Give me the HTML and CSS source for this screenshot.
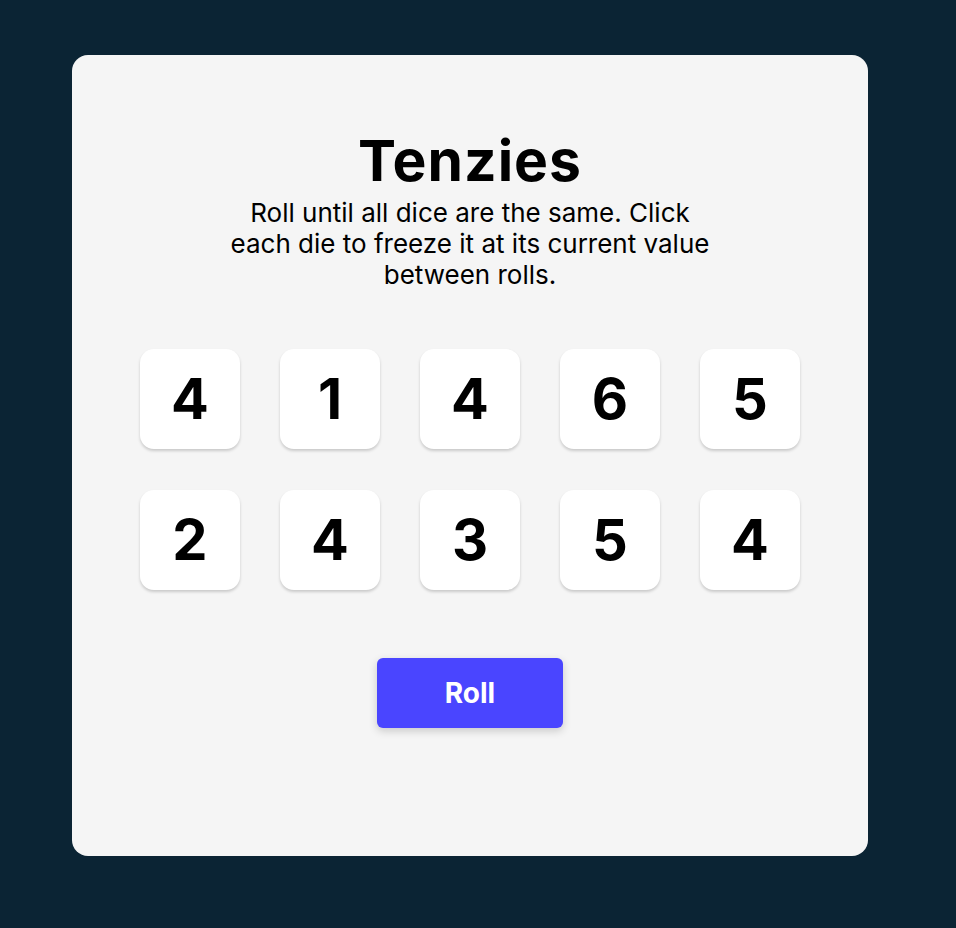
FILE: index.html
```html
<!DOCTYPE html>
<html>
<head>
<meta charset="utf-8">
<link rel="stylesheet" href="styles.css">
</head>
<body>
<main class="card">
  <h1 class="title">Tenzies</h1>
  <p class="instructions">Roll until all dice are the same. Click each die to freeze it at its current value between rolls.</p>
  <div class="dice">
    <button class="die">4</button>
    <button class="die">1</button>
    <button class="die">4</button>
    <button class="die">6</button>
    <button class="die">5</button>
    <button class="die">2</button>
    <button class="die">4</button>
    <button class="die">3</button>
    <button class="die">5</button>
    <button class="die">4</button>
  </div>
  <button class="roll">Roll</button>
</main>
</body>
</html>
```
FILE: styles.css
```css
html, body {
  margin: 0;
  padding: 0;
}
body {
  background: #0B2434;
  font-family: Inter, "Noto Sans", sans-serif;
  padding: 55px 0 0 72px;
  min-height: 928px;
  box-sizing: border-box;
}
.card {
  width: 796px;
  height: 801px;
  background: #F5F5F5;
  border-radius: 16px;
  display: flex;
  flex-direction: column;
  align-items: center;
  box-sizing: border-box;
  padding-top: 77px;
}
.title {
  margin: 0;
  font-size: 57px;
  font-weight: 700;
  letter-spacing: 1px;
  line-height: 1;
  color: #000;
}
.instructions {
  margin: 8px 0 0;
  width: 490px;
  text-align: center;
  font-size: 26px;
  line-height: 31px;
  color: #000;
}
.dice {
  margin-top: 59px;
  display: grid;
  grid-template-columns: repeat(5, 100px);
  column-gap: 40px;
  row-gap: 41px;
}
.die {
  width: 100px;
  height: 100px;
  border: none;
  border-radius: 14px;
  background: #FFFFFF;
  box-shadow: 0 2px 3px rgba(0, 0, 0, 0.18);
  font-family: Inter, "Noto Sans", sans-serif;
  font-size: 56px;
  font-weight: 700;
  color: #000;
  padding: 0;
}
.roll {
  margin-top: 68px;
  width: 186px;
  height: 70px;
  border: none;
  border-radius: 6px;
  background: #4A45FF;
  color: #fff;
  font-family: Inter, "Noto Sans", sans-serif;
  font-size: 28px;
  font-weight: 700;
  box-shadow: 0 3px 8px rgba(0, 0, 0, 0.18);
}
```
